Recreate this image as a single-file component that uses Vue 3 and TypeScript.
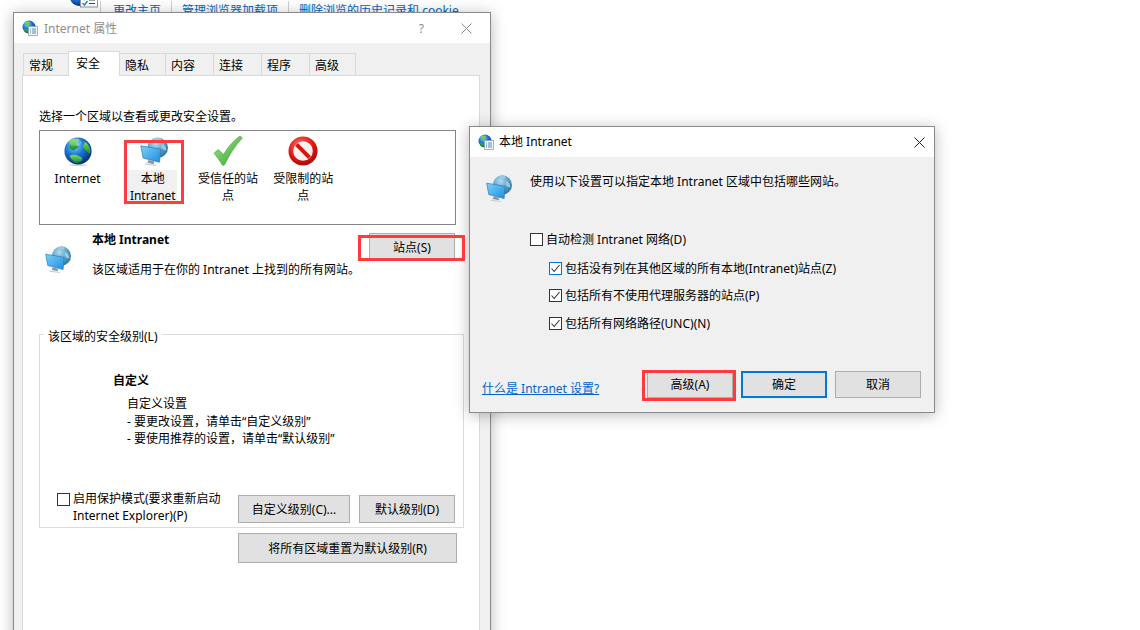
<script setup lang="ts">
interface Tab {
  label: string
  width: number
  active?: boolean
}

interface Zone {
  label: string
  icon: string
  selected?: boolean
}

const tabs: Tab[] = [
  { label: '常规', width: 46 },
  { label: '安全', width: 52, active: true },
  { label: '隐私', width: 46 },
  { label: '内容', width: 48 },
  { label: '连接', width: 48 },
  { label: '程序', width: 48 },
  { label: '高级', width: 46 },
]

const zones: Zone[] = [
  { label: 'Internet', icon: '#i-globe' },
  { label: '本地 Intranet', icon: '#i-intranet', selected: true },
  { label: '受信任的站点', icon: '#i-check' },
  { label: '受限制的站点', icon: '#i-block' },
]

const subOptions = [
  '包括没有列在其他区域的所有本地(Intranet)站点(Z)',
  '包括所有不使用代理服务器的站点(P)',
  '包括所有网络路径(UNC)(N)',
]
</script>

<template>
  <div class="desktop">
    <svg class="defs" width="0" height="0" aria-hidden="true">
      <defs>
        <radialGradient id="g-sea" cx="38%" cy="30%" r="75%">
          <stop offset="0" stop-color="#8fd0ff" />
          <stop offset="0.45" stop-color="#1b79d8" />
          <stop offset="1" stop-color="#07276f" />
        </radialGradient>
        <radialGradient id="g-sea-pale" cx="40%" cy="30%" r="75%">
          <stop offset="0" stop-color="#b5dcf0" />
          <stop offset="0.6" stop-color="#4f9cc4" />
          <stop offset="1" stop-color="#2c6f99" />
        </radialGradient>
        <linearGradient id="g-land" x1="0" y1="0" x2="0" y2="1">
          <stop offset="0" stop-color="#7fdc5a" />
          <stop offset="1" stop-color="#138a2c" />
        </linearGradient>
        <linearGradient id="g-screen" x1="0" y1="0" x2="1" y2="1">
          <stop offset="0" stop-color="#7fd0f8" />
          <stop offset="1" stop-color="#1c8ee0" />
        </linearGradient>
        <linearGradient id="g-tick" x1="0" y1="0" x2="1" y2="1">
          <stop offset="0" stop-color="#a6e58a" />
          <stop offset="1" stop-color="#2da52c" />
        </linearGradient>
        <radialGradient id="g-red" cx="40%" cy="30%" r="80%">
          <stop offset="0" stop-color="#ff6a5c" />
          <stop offset="0.6" stop-color="#dc1210" />
          <stop offset="1" stop-color="#8d0a0a" />
        </radialGradient>
      </defs>

      <symbol id="i-globe" viewBox="0 0 32 32">
        <ellipse cx="16" cy="31" rx="10" ry="1" fill="#cfcfcf" />
        <g transform="translate(0 1)">
          <circle cx="16" cy="15" r="14.5" fill="url(#g-sea)" />
          <path d="M8 3.500c3-1.500 7-2 9-1 1 1.500-1 3-3 3.500-.5 2 1 3.500 3 4.500-1 2-4 1.500-5 3.500-2 .5-5-1.500-6-4 .5-2.500 1-5 2-6.500z" fill="url(#g-land)" />
          <path d="M23 5c3 1.500 5 4.500 6 8 .5 2 0 4-.5 5.500-1.500-.5-2.500-3-4-4-1.500-1.500-3.500-2.500-3-5 .5-1.500 1.500-3 1.500-4.500z" fill="url(#g-land)" />
          <path d="M7 20c3-1.500 7-1 10 .5 2.500.5 4 2 3.500 4-2 2-5 3.500-7.500 3-2.500-2-5-4.500-6-7.500z" fill="url(#g-land)" />
          <ellipse cx="13" cy="6" rx="7" ry="3.500" fill="#fff" opacity=".22" />
        </g>
      </symbol>

      <symbol id="i-intranet" viewBox="0 0 32 32">
        <circle cx="21" cy="12.500" r="11" fill="url(#g-sea-pale)" />
        <path d="M17 2.500c3-1 6-.5 8 .5 0 2-3 2.500-4 3.500-2 .5-4-2-4-4zM26 8c2 1 4 4 4 7-2 1-4-1-5-3-.5-1.500 0-3 1-4z" fill="#9cc9dd" />
        <path d="M3 10.500 24 14 23 28 5.500 23.500z" fill="url(#g-screen)" stroke="#2a7cbc" stroke-width=".8" />
        <path d="M11 25.500 17 27 17 30 10 28.500z" fill="#8b97a3" />
        <path d="M8 29 20 31 19 32 7 30.500z" fill="#c6cdd3" />
      </symbol>

      <symbol id="i-check" viewBox="0 0 32 32">
        <path d="M1 18.500 5.500 14.500c2 1.500 4 3.500 5.500 5.500C15 13 21 6 28 .5c1.500-.5 3 .5 3 2C24 10 18 19 12.500 30.500c-.5 1-2 1-2.800.2C7 26 4 22 1 18.500z" fill="url(#g-tick)" stroke="#3c9a35" stroke-width=".6" />
      </symbol>

      <symbol id="i-block" viewBox="0 0 32 32">
        <circle cx="16" cy="16" r="15.500" fill="url(#g-red)" />
        <circle cx="16" cy="16" r="10.500" fill="#f7f1f0" />
        <path d="M7.500 10.500 10.500 7.500 24.500 21.500 21.500 24.500z" fill="#d9150f" />
      </symbol>

      <symbol id="i-title" viewBox="0 0 16 16">
        <circle cx="7" cy="7" r="6.500" fill="url(#g-sea)" />
        <path d="M3 2.500c2-1 4-1 5 0-1 2-3 4-5 3.500-.6-1.200-.5-2.500 0-3.500zM2 9c2-.5 4 0 5 2-1 1.500-2 2-3 2-1-1-2-2.500-2-4z" fill="url(#g-land)" />
        <rect x="6.500" y="6.500" width="9" height="9" fill="#f4f6f8" stroke="#8fa0ad" stroke-width=".8" />
        <path d="M8 9h1M10 9h4M8 11h1M10 11h4M8 13h1M10 13h4" stroke="#3a7fb5" stroke-width=".9" />
      </symbol>
    </svg>

    <div class="behind">
      <svg class="behind-icon" width="28" height="24" viewBox="0 0 28 24">
        <circle cx="9" cy="3" r="9" fill="url(#g-sea)" />
        <rect x="10.500" y="-1" width="17" height="14" fill="#fff" stroke="#8b9aa5" />
        <path d="M12.500 3l2 2.500 3-5" fill="none" stroke="#2d9b3e" stroke-width="1.400" />
        <path d="M12.500 9l2 2 3-4" fill="none" stroke="#2a7fc0" stroke-width="1.400" />
        <path d="M19 2.500h6M19 6h6M19 9.500h6" stroke="#445" stroke-width="1" />
      </svg>
      <span class="behind-link first">更改主页</span>
      <span class="behind-link">管理浏览器加载项</span>
      <span class="behind-link">删除浏览的历史记录和 cookie</span>
    </div>

    <section class="window props">
      <header class="titlebar">
        <svg class="title-icon"><use href="#i-title" /></svg>
        <span class="title-text muted">Internet 属性</span>
        <span class="help">?</span>
        <svg class="close" width="11" height="11" viewBox="0 0 11 11">
          <path d="M.5.500l10 10M10.500.500l-10 10" stroke="#8a8a8a" fill="none" />
        </svg>
      </header>

      <nav class="tabs">
        <div
          v-for="tab in tabs"
          :key="tab.label"
          class="tab"
          :class="{ active: tab.active }"
          :style="{ width: tab.width + 'px' }"
        >{{ tab.label }}</div>
      </nav>

      <div class="panel">
        <p class="lead">选择一个区域以查看或更改安全设置。</p>

        <div class="zones">
          <div v-for="zone in zones" :key="zone.label" class="zone">
            <svg class="zone-icon"><use :href="zone.icon" /></svg>
            <div class="zone-label" :class="{ selected: zone.selected }">{{ zone.label }}</div>
          </div>
        </div>

        <div class="details">
          <svg class="details-icon"><use href="#i-intranet" /></svg>
          <div class="details-text">
            <div class="strong">本地 Intranet</div>
            <div class="details-desc">该区域适用于在你的 Intranet 上找到的所有网站。</div>
          </div>
          <button class="btn sites">站点(S)</button>
        </div>

        <div class="level">
          <span class="legend">该区域的安全级别(L)</span>
          <div class="strong">自定义</div>
          <div class="level-desc">
            <div>自定义设置</div>
            <div>- 要更改设置，请单击“自定义级别”</div>
            <div>- 要使用推荐的设置，请单击“默认级别”</div>
          </div>
          <div class="level-foot">
            <span class="box protect-box"></span>
            <span class="protect-text">启用保护模式(要求重新启动 Internet Explorer)(P)</span>
            <button class="btn custom">自定义级别(C)...</button>
            <button class="btn default">默认级别(D)</button>
          </div>
        </div>

        <button class="btn reset">将所有区域重置为默认级别(R)</button>
      </div>
    </section>

    <section class="window dialog">
      <header class="titlebar">
        <svg class="title-icon"><use href="#i-title" /></svg>
        <span class="title-text">本地 Intranet</span>
        <svg class="close" width="11" height="11" viewBox="0 0 11 11">
          <path d="M.5.500l10 10M10.500.500l-10 10" stroke="#222" fill="none" />
        </svg>
      </header>

      <div class="dialog-body">
        <div class="intro">
          <svg class="details-icon"><use href="#i-intranet" /></svg>
          <span>使用以下设置可以指定本地 Intranet 区域中包括哪些网站。</span>
        </div>

        <div class="options">
          <label class="option">
            <span class="box"></span>
            <span>自动检测 Intranet 网络(D)</span>
          </label>
          <label v-for="(text, i) in subOptions" :key="text" class="option sub">
            <span class="box" :class="{ focus: i === 0 }">
              <svg width="11" height="11" viewBox="0 0 11 11">
                <path d="M1.500 5.500 4.200 8.500 9.500 2" fill="none" stroke="#333" stroke-width="1.100" />
              </svg>
            </span>
            <span>{{ text }}</span>
          </label>
        </div>

        <div class="dialog-foot">
          <a class="help-link">什么是 Intranet 设置?</a>
          <button class="btn small advanced">高级(A)</button>
          <button class="btn small primary">确定</button>
          <button class="btn small">取消</button>
        </div>
      </div>
    </section>

    <!-- red annotations on top of the screenshot -->
    <div class="mark mark-zone"></div>
    <div class="mark mark-sites"></div>
    <div class="mark mark-advanced"></div>
  </div>
</template>

<style>
html,
body {
  margin: 0;
  background: #fff;
  overflow: hidden;
}
</style>

<style scoped>
.desktop {
  position: relative;
  width: 1140px;
  height: 630px;
  overflow: hidden;
  background: #fff;
  color: #000;
  font: 12px/17px "Noto Sans", "Noto Sans CJK SC", sans-serif;
}

.defs {
  position: absolute;
}

.behind {
  display: flex;
  align-items: center;
  height: 22px;
  padding-left: 70px;
}

.behind-icon {
  flex: none;
  margin-top: -10px;
  width: 28px;
}

.behind-link {
  padding: 0 10px;
  border-left: 1px solid #cfcfcf;
  color: #0066cc;
  line-height: 20px;
}

.behind-link.first {
  margin-left: 2px;
  padding-left: 12px;
}

.window {
  position: absolute;
  box-sizing: border-box;
  background: #f0f0f0;
  border: 1px solid #8a8a8a;
  box-shadow: 0 2px 14px rgba(0, 0, 0, 0.28);
}

.props {
  left: 13px;
  top: 12px;
  width: 478px;
  height: 640px;
}

.dialog {
  left: 469px;
  top: 126px;
  width: 466px;
  height: 287px;
  display: flex;
  flex-direction: column;
}

.titlebar {
  display: flex;
  align-items: center;
  height: 30px;
  flex: none;
  padding-left: 8px;
  background: #fff;
}

.title-icon {
  width: 16px;
  height: 16px;
  flex: none;
}

.title-text {
  margin-left: 5px;
  margin-top: -1px;
  flex: 1;
}

.muted {
  color: #8f8f8f;
  margin-left: 6px;
  margin-top: 0;
}

.help {
  color: #8a8a8a;
  margin-right: 37px;
}

.close {
  flex: none;
  margin-right: 18px;
}

.dialog .close {
  margin-right: 9px;
}

.tabs {
  display: flex;
  align-items: flex-end;
  height: 24px;
  margin: 9px 0 -1px 9px;
  position: relative;
  z-index: 1;
}

.tab {
  box-sizing: border-box;
  height: 23px;
  padding: 3px 0 0 5px;
  border: 1px solid #d9d9d9;
  border-left-width: 0;
  background: #f0f0f0;
}

.tab:first-child {
  border-left-width: 1px;
}

.tab.active {
  height: 25px;
  margin-left: -1px;
  padding: 3px 0 0 7px;
  border-left-width: 1px;
  border-bottom: 0;
  background: #fff;
}

.panel {
  box-sizing: border-box;
  height: 560px;
  margin: 0 10px 0 8px;
  padding: 0 0 0 16px;
  border: 1px solid #d9d9d9;
  background: #fff;
}

.lead {
  margin: 0;
  padding-top: 32px;
}

.zones {
  box-sizing: border-box;
  display: flex;
  width: 417px;
  height: 95px;
  margin-top: 5px;
  padding: 4px 0 0 0;
  border: 1px solid #868686;
}

.zone {
  display: flex;
  flex-direction: column;
  align-items: center;
  width: 75.200px;
  flex: none;
}

.zone-icon {
  width: 30px;
  height: 32px;
}

.zone-label {
  width: 62px;
  margin-top: 3px;
  text-align: center;
}

.zone-label.selected {
  width: 49px;
  background: #f0f0f0;
}

.details {
  display: flex;
  align-items: flex-start;
  width: 417px;
  height: 101px;
  margin-top: 8px;
}

.details-icon {
  flex: none;
  width: 28px;
  height: 30px;
}

.details > .details-icon {
  margin: 11px 0 0 4px;
}

.details-text {
  flex: 1;
  min-width: 0;
  margin: -2px 0 0 21px;
  white-space: nowrap;
}

.strong {
  font-weight: 700;
}

.details-desc {
  margin-top: 13px;
}

.btn {
  box-sizing: border-box;
  flex: none;
  height: 28px;
  padding: 0;
  border: 1px solid #adadad;
  background: #e1e1e1;
  color: #000;
  font: inherit;
}

.sites {
  width: 86px;
  margin-right: 1px;
}

.level {
  position: relative;
  box-sizing: border-box;
  display: flex;
  flex-direction: column;
  width: 425px;
  height: 194px;
  padding: 37px 0 3px 73px;
  border: 1px solid #dcdcdc;
}

.legend {
  position: absolute;
  left: 4px;
  top: -7px;
  padding: 0 4px;
  background: #fff;
}

.level-desc {
  margin: 6px 0 0 14px;
  line-height: 17.500px;
}

.level-foot {
  display: flex;
  align-items: flex-start;
  margin: auto 0 0 -56px;
}

.box {
  box-sizing: border-box;
  display: inline-flex;
  flex: none;
  align-items: center;
  justify-content: center;
  width: 13px;
  height: 13px;
  border: 1px solid #333;
  background: #fff;
}

.protect-box {
  margin-top: 3px;
}

.protect-text {
  width: 156px;
  margin: 0 9px 0 3px;
}

.custom,
.default {
  margin-top: 5px;
}

.custom {
  width: 112px;
  margin-right: 9px;
}

.default {
  width: 96px;
}

.reset {
  display: block;
  width: 219px;
  height: 30px;
  margin: 5px 0 0 199px;
}

.dialog-body {
  display: flex;
  flex: 1;
  flex-direction: column;
}

.intro {
  display: flex;
  align-items: flex-start;
  padding: 16px 0 0 14px;
}

.intro span {
  margin: 0 0 0 18px;
}

.options {
  display: flex;
  flex-direction: column;
  gap: 10.500px;
  margin: 28px 0 0 60px;
}

.option {
  display: flex;
  align-items: center;
  gap: 3px;
}

.option:first-child {
  margin-bottom: 1px;
}

.option.sub {
  margin-left: 19px;
}

.box.focus {
  border-color: #0078d7;
}

.dialog-foot {
  display: flex;
  align-items: flex-start;
  margin-top: auto;
  padding: 0 13px 14px 12px;
  gap: 8px;
}

.help-link {
  margin: 9px auto 0 0;
  color: #0066cc;
  text-decoration: underline;
}

.small {
  width: 86px;
  height: 27px;
}

.primary {
  border: 2px solid #0078d7;
}

.mark {
  position: absolute;
  box-sizing: border-box;
  border: 3px solid #ff3b3b;
  pointer-events: none;
}

.mark-zone {
  left: 124px;
  top: 140px;
  width: 60px;
  height: 64px;
}

.mark-sites {
  left: 358px;
  top: 235px;
  width: 107px;
  height: 26px;
}

.mark-advanced {
  left: 642px;
  top: 370px;
  width: 94px;
  height: 31px;
}
</style>
